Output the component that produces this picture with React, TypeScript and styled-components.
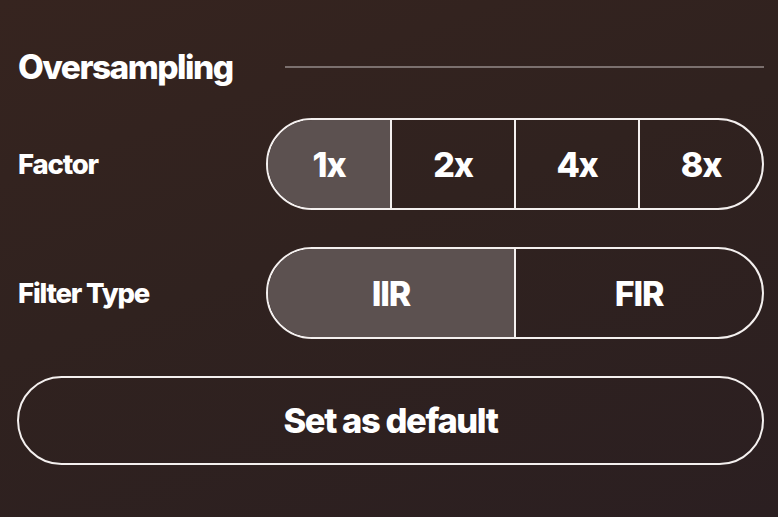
import { createGlobalStyle } from 'styled-components';
import styled from 'styled-components';
import { useState } from 'react';

const GlobalStyle = createGlobalStyle`
  html, body {
    margin: 0;
    padding: 0;
    height: 100%;
  }
  body {
    background: linear-gradient(160deg, #36241f 0%, #30221f 45%, #2b1f21 100%);
    font-family: Inter, "Noto Sans", sans-serif;
    color: #ffffff;
  }
`;

const factors = ['1x', '2x', '4x', '8x'];
const filters = ['IIR', 'FIR'];

export default function App() {
  const [factor, setFactor] = useState('1x');
  const [filter, setFilter] = useState('IIR');

  return (
    <>
      <GlobalStyle />
      <Panel>
        <Header>
          <Title>Oversampling</Title>
          <Rule />
        </Header>
        <Row>
          <Label>Factor</Label>
          <Segments>
            {factors.map((f) => (
              <Segment key={f} $active={f === factor} onClick={() => setFactor(f)}>
                {f}
              </Segment>
            ))}
          </Segments>
        </Row>
        <Row>
          <Label>Filter Type</Label>
          <Segments>
            {filters.map((f) => (
              <Segment key={f} $active={f === filter} onClick={() => setFilter(f)}>
                {f}
              </Segment>
            ))}
          </Segments>
        </Row>
        <DefaultButton>Set as default</DefaultButton>
      </Panel>
    </>
  );
}

const Panel = styled.div`
  display: flex;
  flex-direction: column;
  gap: 37px;
  padding: 42px 14px 0 17px;
`;

const Header = styled.div`
  display: flex;
  align-items: center;
  height: 50px;
  margin-bottom: -11px;
  padding-left: 1px;
`;

const Title = styled.h2`
  margin: 0;
  font-size: 33.5px;
  font-weight: 800;
  letter-spacing: -1.55px;
`;

const Rule = styled.div`
  flex: 1;
  height: 2px;
  margin-left: 52px;
  background: #7b706e;
`;

const Row = styled.div`
  display: grid;
  grid-template-columns: 249px 1fr;
  align-items: center;
`;

const Label = styled.div`
  padding-left: 1px;
  font-size: 27.5px;
  font-weight: 800;
  letter-spacing: -1.2px;
`;

const Segments = styled.div`
  display: flex;
  height: 92px;
  box-sizing: border-box;
  border: 2px solid #f4f0ef;
  border-radius: 46px;
  overflow: hidden;
`;

const Segment = styled.button<{ $active: boolean }>`
  flex: 1;
  border: none;
  border-left: 2px solid #f4f0ef;
  background: ${({ $active }) => ($active ? '#5c5150' : 'transparent')};
  color: #ffffff;
  font-family: inherit;
  font-size: 34px;
  font-weight: 800;
  letter-spacing: -1.2px;
  cursor: pointer;

  &:first-child {
    border-left: none;
  }
`;

const DefaultButton = styled.button`
  height: 89px;
  border: 2px solid #f4f0ef;
  border-radius: 45px;
  background: transparent;
  color: #ffffff;
  font-family: inherit;
  font-size: 34.5px;
  font-weight: 800;
  letter-spacing: -1.4px;
  cursor: pointer;
`;
